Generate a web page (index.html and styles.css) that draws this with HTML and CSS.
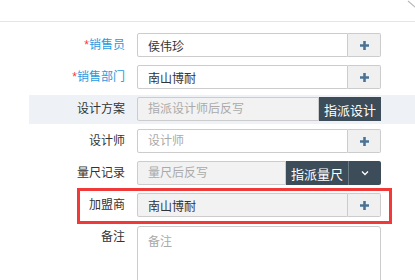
FILE: index.html
```html
<!DOCTYPE html>
<html lang="zh-CN"><head>
<meta charset="utf-8">
<title>加盟商</title>
<link rel="stylesheet" href="styles.css">
</head><body>
<div class="head">
<svg class="head-arrow" width="16" height="10" viewBox="0 0 16 10"><path d="M1,1 L8,7 L15,1" fill="none" stroke="#bbb" stroke-width="1.2"/></svg>
</div>
<form class="form">
<div class="row">
<label class="label req"><i>*</i>销售员</label>
<div class="group">
<input class="field" value="侯伟珍">
<span class="addon"><svg width="11" height="11" viewBox="0 0 11 11"><path d="M5.5,1 V10 M1,5.5 H10" stroke="#4a7398" stroke-width="2.6"/></svg></span>
</div>
</div>
<div class="row">
<label class="label req"><i>*</i>销售部门</label>
<div class="group">
<input class="field" value="南山博耐">
<span class="addon"><svg width="11" height="11" viewBox="0 0 11 11"><path d="M5.5,1 V10 M1,5.5 H10" stroke="#4a7398" stroke-width="2.6"/></svg></span>
</div>
</div>
<div class="row row-hl">
<label class="label">设计方案</label>
<div class="group">
<input class="field ro" placeholder="指派设计师后反写" readonly>
<span class="btn-dark">指派设计</span>
</div>
</div>
<div class="row">
<label class="label">设计师</label>
<div class="group">
<input class="field" placeholder="设计师">
<span class="addon"><svg width="11" height="11" viewBox="0 0 11 11"><path d="M5.5,1 V10 M1,5.5 H10" stroke="#4a7398" stroke-width="2.6"/></svg></span>
</div>
</div>
<div class="row">
<label class="label">量尺记录</label>
<div class="group">
<input class="field ro" placeholder="量尺后反写" readonly>
<span class="btn-dark">指派量尺</span>
<span class="btn-dark btn-caret"><svg width="8" height="6" viewBox="0 0 8 6"><path d="M1,1.5 L4,4.5 L7,1.5" fill="none" stroke="#fff" stroke-width="1.3"/></svg></span>
</div>
</div>
<div class="row">
<label class="label">加盟商</label>
<div class="group">
<input class="field ro" value="南山博耐" readonly>
<span class="addon"><svg width="11" height="11" viewBox="0 0 11 11"><path d="M5.5,1 V10 M1,5.5 H10" stroke="#4a7398" stroke-width="2.6"/></svg></span>
</div>
</div>
<div class="row">
<label class="label">备注</label>
<textarea class="memo" placeholder="备注"></textarea>
</div>
</form>
<div class="mark"></div>
</body></html>
```
FILE: styles.css
```css
body {
	margin: 0;
	font: 12px "Liberation Sans", "Noto Sans CJK SC", sans-serif;
	color: #333;
	background: #fff;
	overflow: hidden;
}

.head {
	height: 21px;
	border-bottom: 1px solid #e5e5e5;
	display: flex;
	justify-content: flex-end;
	overflow: hidden;
}

.head-arrow {
	margin: 0 -8px 0 0;
}

.form {
	padding-top: 7px;
	height: 251px;
	overflow: hidden;
}

.row {
	display: flex;
	align-items: flex-start;
	margin-left: 29px;
	padding: 4px 0;
}

.row-hl {
	background: #eef2f6;
	padding: 2px 0 3px;
	margin-top: 2px;
	margin-bottom: 1px;
}

.label {
	width: 96px;
	flex: none;
	text-align: right;
	line-height: 24px;
	margin-right: 12px;
}

.req {
	color: #2b9ae0;
}

.req i {
	font-style: normal;
	color: #f03c3c;
}

.group {
	display: flex;
	width: 244px;
	height: 24px;
}

.field {
	flex: 1;
	min-width: 0;
	box-sizing: border-box;
	height: 24px;
	margin: 0;
	padding: 0 10px;
	border: 1px solid #ccc;
	border-radius: 2px 0 0 2px;
	font: inherit;
	color: #333;
	background: #fff;
	outline: none;
}

.field::placeholder,
.memo::placeholder {
	color: #aaa;
}

.ro {
	background: #f2f2f2;
}

.addon {
	width: 33px;
	flex: none;
	box-sizing: border-box;
	border: 1px solid #ccc;
	border-left: 0;
	border-radius: 0 2px 2px 0;
	background: #f0f0f0;
	display: flex;
	align-items: center;
	justify-content: center;
}

.btn-dark {
	flex: none;
	width: 62px;
	background: #3c4c58;
	color: #fff;
	font-size: 13px;
	display: flex;
	align-items: center;
	justify-content: center;
}

.btn-caret {
	width: 32px;
	border-left: 1px solid #6b7b86;
	border-radius: 0 2px 2px 0;
}

.memo {
	width: 244px;
	height: 70px;
	box-sizing: border-box;
	margin: 1px 0 0;
	padding: 5px 10px;
	border: 1px solid #ccc;
	border-radius: 3px;
	font: inherit;
	resize: none;
	outline: none;
}

.mark {
	position: absolute;
	left: 77px;
	top: 188px;
	width: 315px;
	height: 36px;
	box-sizing: border-box;
	border: 3px solid #f03a3a;
}
```
